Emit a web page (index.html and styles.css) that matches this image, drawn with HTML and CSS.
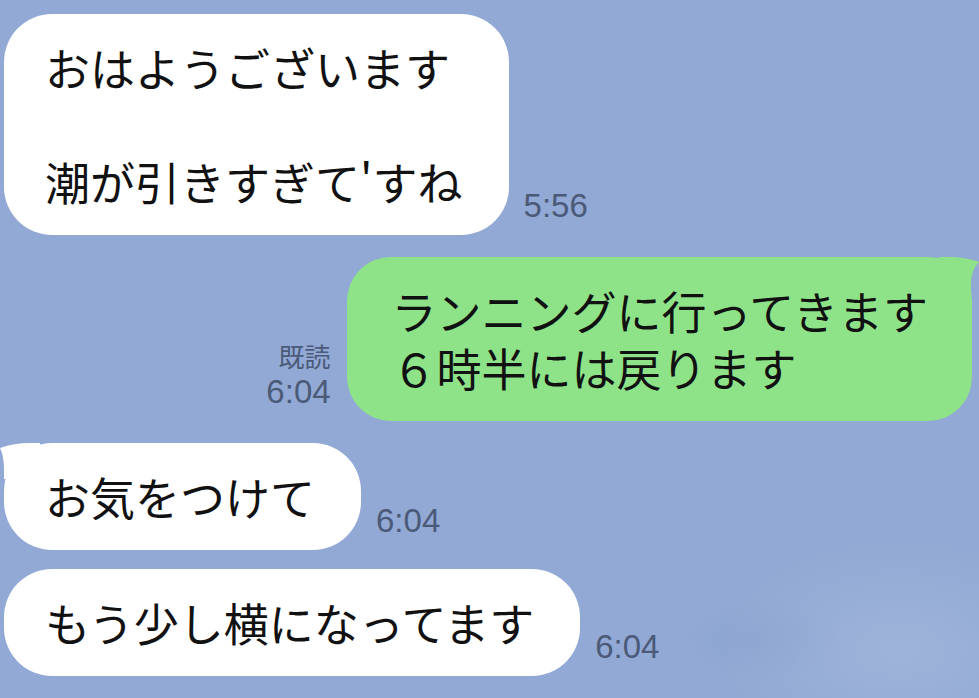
FILE: index.html
```html
<!DOCTYPE html>
<html lang="ja">
<head>
  <meta charset="UTF-8" />
  <meta name="viewport" content="width=device-width, initial-scale=1.0"/>
  <title>トーク</title>
  <link rel="stylesheet" href="styles.css">
</head>
<body>
  <div id="chat">
    <div class="row incoming">
      <div class="bubble">おはようございます<br><br>潮が引きすぎて'すね</div>
      <div class="meta"><span class="time">5:56</span></div>
    </div>

    <div class="row outgoing">
      <div class="meta">
        <span class="read">既読</span>
        <span class="time">6:04</span>
      </div>
      <div class="bubble green tail-right">ランニングに行ってきます<br>６時半には戻ります</div>
    </div>

    <div class="row incoming">
      <div class="bubble tail-left">お気をつけて</div>
      <div class="meta"><span class="time">6:04</span></div>
    </div>

    <div class="row incoming last">
      <div class="bubble">もう少し横になってます</div>
      <div class="meta"><span class="time">6:04</span></div>
    </div>
  </div>
</body>
</html>
```

FILE: styles.css
```css
* {
  box-sizing: border-box;
  margin: 0;
  padding: 0;
}

body {
  font-family: "Noto Sans CJK JP", sans-serif;
  background: #91a9d4;
  background-image:
    radial-gradient(ellipse 260px 160px at 900px 650px, rgba(255, 255, 255, 0.12), transparent 70%),
    radial-gradient(ellipse 120px 60px at 760px 640px, rgba(80, 110, 170, 0.08), transparent 70%);
  height: 100vh;
  overflow: hidden;
  color: #111;
}

#chat {
  display: flex;
  flex-direction: column;
  gap: 22px;
  padding: 14px 7px 0 4px;
}

.row {
  display: flex;
  align-items: flex-end;
}

.row.last {
  margin-top: -3px;
}

.outgoing {
  justify-content: flex-end;
}

.bubble {
  position: relative;
  background: #fff;
  font-size: 45px;
  line-height: 57px;
  padding: 25px 46px 25px 41px;
  border-radius: 48px;
  white-space: nowrap;
}

.bubble.green {
  background: #8ee389;
  padding: 25px 44px 25px 45px;
  border-radius: 44px;
}

.tail-right::after,
.tail-left::before {
  content: "";
  position: absolute;
  top: 0;
  width: 40px;
  height: 36px;
  background: inherit;
}

.tail-right::after {
  right: -7px;
  clip-path: path("M0 0 L10 0 Q26 0 40 5 Q32 12 32 28 L32 36 L0 36 Z");
}

.tail-left::before {
  left: -4px;
  clip-path: path("M40 0 L30 0 Q14 0 0 5 Q4 12 4 28 L4 36 L40 36 Z");
}

.meta {
  display: flex;
  flex-direction: column;
  align-items: flex-end;
  color: #4b5a79;
  margin: 0 16px 12px 16px;
}

.incoming .meta {
  margin-left: 15px;
}

.time {
  font-family: "Liberation Sans", "Noto Sans CJK JP", sans-serif;
  font-size: 33px;
  line-height: 34px;
}

.read {
  font-size: 26px;
  line-height: 30px;
  margin-bottom: 4px;
}
```
